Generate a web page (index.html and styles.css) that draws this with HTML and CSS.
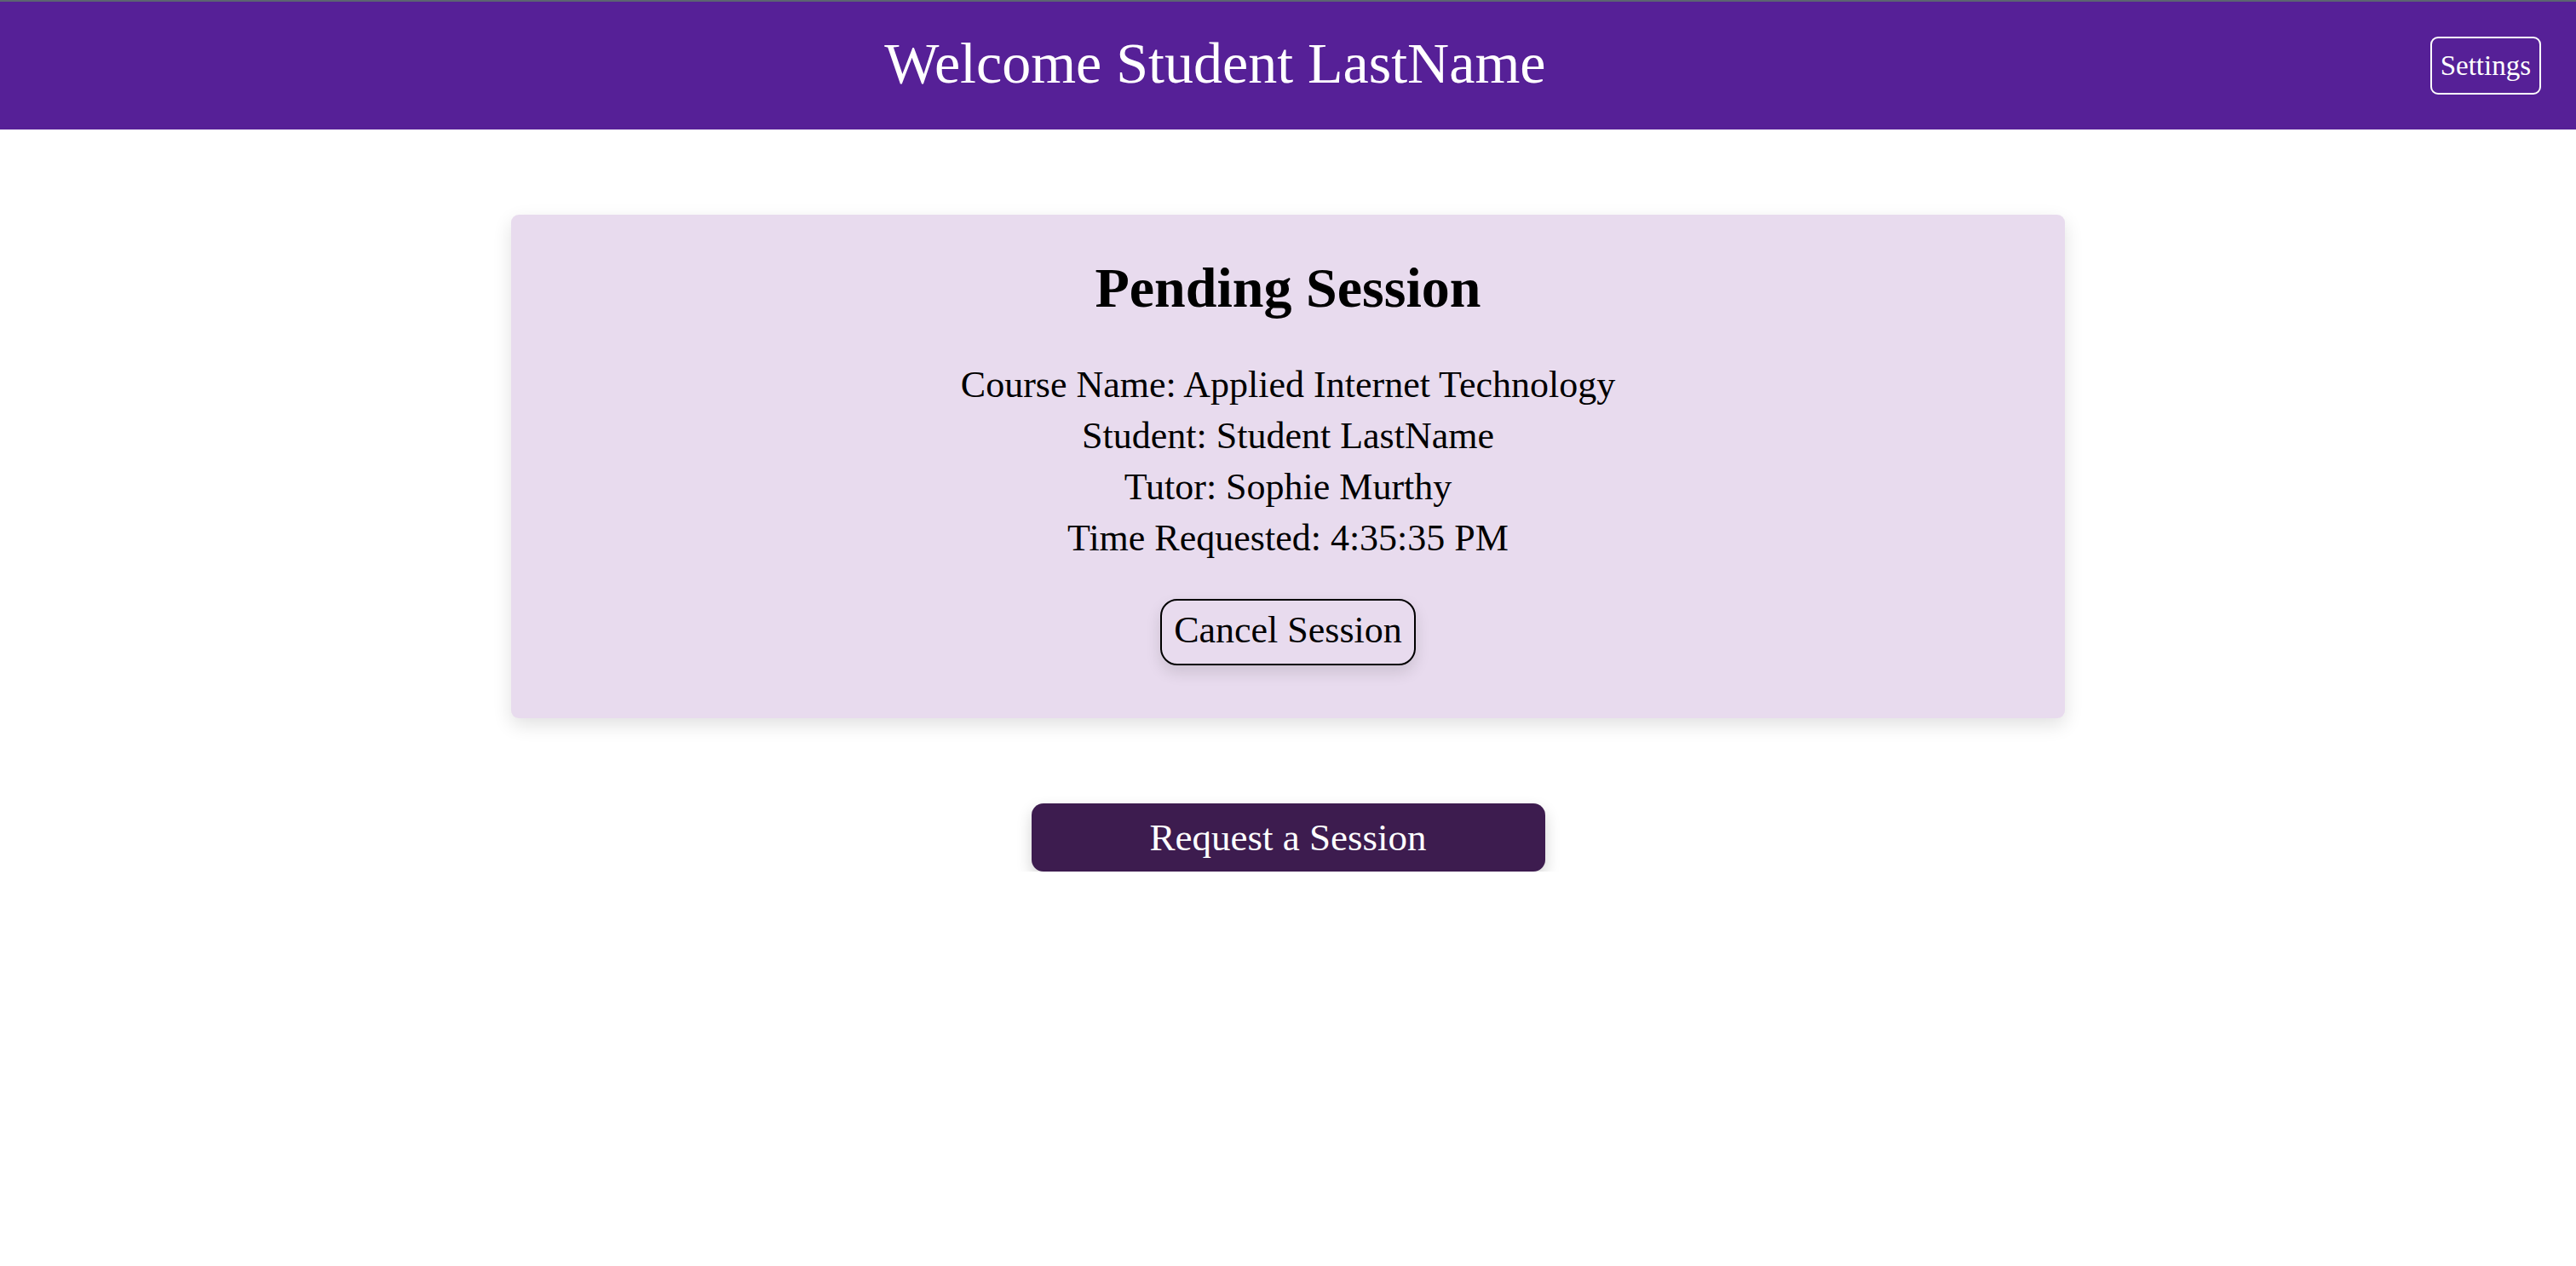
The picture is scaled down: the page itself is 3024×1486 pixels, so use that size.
FILE: index.html
```html
<!DOCTYPE html>
<html lang="en">
<head>
<meta charset="utf-8">
<title>Tutoring</title>
<link rel="stylesheet" href="styles.css">
</head>
<body>
<header class="topbar">
  <h1 class="welcome">Welcome Student LastName</h1>
  <button class="settings-btn">Settings</button>
</header>
<main class="content">
  <section class="session-card">
    <h2 class="card-title">Pending Session</h2>
    <div class="details">
      <p>Course Name: Applied Internet Technology</p>
      <p>Student: Student LastName</p>
      <p>Tutor: Sophie Murthy</p>
      <p>Time Requested: 4:35:35 PM</p>
    </div>
    <button class="cancel-btn">Cancel Session</button>
  </section>
  <button class="request-btn">Request a Session</button>
</main>
</body>
</html>
```

FILE: styles.css
```css
html, body {
  margin: 0;
  padding: 0;
  background: #ffffff;
}
body {
  font-family: "Liberation Serif", "Times New Roman", serif;
  color: #000;
}
.topbar {
  display: flex;
  align-items: center;
  height: 150px;
  background: #562097;
  border-top: 2px solid #5c6470;
  padding-right: 41px;
}
.welcome {
  flex: 1;
  margin: 0;
  text-align: center;
  color: #fff;
  font-weight: 400;
  font-size: 68px;
  line-height: 68px;
  padding-bottom: 6px;
}
.settings-btn {
  font-family: inherit;
  font-size: 33px;
  line-height: 64px;
  color: #fff;
  background: transparent;
  border: 2px solid #fff;
  border-radius: 9px;
  padding: 0 10px;
  margin: 0;
}
.content {
  display: flex;
  flex-direction: column;
  align-items: center;
  padding-top: 100px;
}
.session-card {
  width: 1824px;
  box-sizing: border-box;
  background: #e8dbee;
  border-radius: 9px;
  box-shadow: 0 8px 22px rgba(0, 0, 0, 0.12);
  padding: 46px 0 62px;
  display: flex;
  flex-direction: column;
  align-items: center;
  text-align: center;
}
.card-title {
  margin: 0;
  font-size: 66px;
  line-height: 80px;
  font-weight: 700;
}
.details {
  margin-top: 44px;
}
.details p {
  margin: 0;
  font-size: 44px;
  line-height: 60px;
}
.cancel-btn {
  margin-top: 41px;
  font-family: inherit;
  font-size: 44px;
  line-height: 70px;
  padding: 0 14px 4px;
  color: #000;
  background: transparent;
  border: 2px solid #000;
  border-radius: 20px;
  box-shadow: 0 8px 18px rgba(0, 0, 0, 0.12);
}
.request-btn {
  margin-top: 100px;
  width: 603px;
  height: 80px;
  font-family: inherit;
  font-size: 45px;
  line-height: 80px;
  padding: 0 0 4px;
  color: #fff;
  background: #3d1c4f;
  border: none;
  border-radius: 14px;
  box-shadow: 0 8px 18px rgba(0, 0, 0, 0.18);
}
```
